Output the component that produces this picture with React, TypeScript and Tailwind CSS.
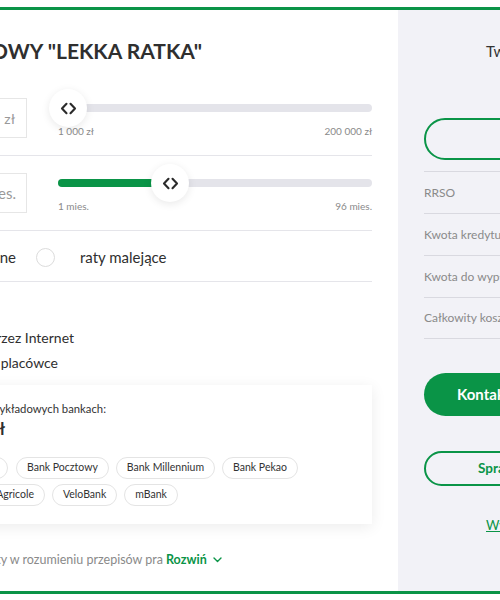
import React from "react";

const GREEN = "#0a9447";

function Chevrons() {
  return (
    <svg width="17" height="13" viewBox="0 0 17 13" fill="none">
      <path d="M6.5 1.8L2 6.5L6.5 11.2" stroke="#2b2b2b" strokeWidth="2.1" strokeLinecap="round" strokeLinejoin="round" />
      <path d="M10.5 1.8L15 6.5L10.5 11.2" stroke="#2b2b2b" strokeWidth="2.1" strokeLinecap="round" strokeLinejoin="round" />
    </svg>
  );
}

function Slider({ fill, thumb, min, max }: { fill: number; thumb: number; min: string; max: string }) {
  return (
    <div className="ml-[31px] w-[314px] shrink-0 pt-[6px]">
      <div className="relative h-[8px] rounded-full bg-[#e4e4ea]">
        {fill > 0 && (
          <div className="absolute left-0 top-0 h-[8px] rounded-full bg-[#0a9447]" style={{ width: fill }} />
        )}
        <div
          className="absolute top-[-15px] flex h-[38px] w-[38px] items-center justify-center rounded-full bg-white shadow-[0_2px_8px_rgba(0,0,0,0.09)]"
          style={{ left: thumb - 19 }}
        >
          <Chevrons />
        </div>
      </div>
      <div className="mt-[12px] flex justify-between text-[10px] leading-[14px] text-[#8a8a8a]">
        <span>{min}</span>
        <span>{max}</span>
      </div>
    </div>
  );
}

function Pill({ label }: { label: string }) {
  return (
    <span className="flex h-[22px] shrink-0 items-center whitespace-nowrap rounded-full border border-[#e4e4e4] px-[10px] text-[10.5px] text-[#333]">
      {label}
    </span>
  );
}

function Radio() {
  return <span className="block h-[19px] w-[19px] shrink-0 rounded-full border border-[#dcdcdc] bg-white" />;
}

export default function App() {
  return (
    <div className="h-[600px] w-[500px] overflow-hidden bg-white pt-[7px] font-['Lato',sans-serif] text-[#2f2f2f]">
      <div className="flex h-[587px] border-y-[3px] border-[#0a9447]">
        {/* left: calculator */}
        <div className="w-[398px] shrink-0 overflow-hidden">
          <div className="ml-[-202px] w-[574px]">
            <h1 className="w-[404px] whitespace-nowrap pt-[27px] text-right text-[21px] font-bold leading-[28px]">
              KREDYT GOTÓWKOWY "LEKKA RATKA"
            </h1>

            <div className="mt-[33px] flex border-b border-[#e5e5ea] pb-[17px]">
              <div className="w-[109px] shrink-0 text-[14px] leading-[40px] text-[#333]">Kwota</div>
              <div className="flex h-[40px] w-[120px] shrink-0 items-center justify-end border border-[#e6e6e6] pr-[11px] text-[14px] whitespace-nowrap">
                <span className="mr-[6px] text-[#333]">10 000</span>
                <span className="text-[#999]">zł</span>
              </div>
              <Slider fill={0} thumb={10} min="1 000 zł" max="200 000 zł" />
            </div>

            <div className="flex border-b border-[#e5e5ea] pb-[17px] pt-[17px]">
              <div className="w-[109px] shrink-0 text-[14px] leading-[40px] text-[#333]">Okres</div>
              <div className="flex h-[40px] w-[120px] shrink-0 items-center justify-end border border-[#e6e6e6] pr-[10px] text-[15px] whitespace-nowrap">
                <span className="mr-[6px] text-[#333]">36</span>
                <span className="text-[#999]">mies.</span>
              </div>
              <Slider fill={100} thumb={112} min="1 mies." max="96 mies." />
            </div>

            <div className="flex items-center border-b border-[#e5e5ea] pb-[14px] pt-[16px]">
              <div className="flex w-[218px] shrink-0 items-center justify-end gap-[20px] text-[15px] leading-[20px] whitespace-nowrap">
                <Radio />
                <span>raty równe</span>
              </div>
              <div className="ml-[20px]">
                <Radio />
              </div>
              <span className="ml-[25px] text-[15px] leading-[20px]">raty malejące</span>
            </div>

            <div className="mt-[43px] text-[14px] leading-[25px] whitespace-nowrap">
              <div className="w-[276px] text-right">Wniosek przez Internet</div>
              <div className="w-[260px] text-right">Wniosek w placówce</div>
            </div>

            <div className="mt-[10px] w-[574px] bg-white pb-[18px] pt-[16px] shadow-[0_3px_14px_rgba(0,0,0,0.08)]">
              <div className="w-[308px] text-right text-[11.3px] leading-[16px] whitespace-nowrap text-[#333]">
                Miesięczna rata w przykładowych bankach:
              </div>
              <div className="mt-[1px] w-[207px] text-right text-[17px] font-bold leading-[22px] whitespace-nowrap">
                od 345,67 zł
              </div>
              <div className="mt-[17px] flex">
                <div className="flex w-[210px] shrink-0 justify-end gap-[8px]">
                  <Pill label="PKO BP" />
                  <Pill label="ING" />
                </div>
                <div className="ml-[8px] flex gap-[7px]">
                  <Pill label="Bank Pocztowy" />
                  <Pill label="Bank Millennium" />
                  <Pill label="Bank Pekao" />
                </div>
              </div>
              <div className="mt-[5px] flex">
                <div className="flex w-[247px] shrink-0 justify-end gap-[7px]">
                  <Pill label="Santander" />
                  <Pill label="Credit Agricole" />
                </div>
                <div className="ml-[7px] flex gap-[7px]">
                  <Pill label="VeloBank" />
                  <Pill label="mBank" />
                </div>
              </div>
            </div>

            <div className="mt-[28px] flex items-center text-[12.5px] leading-[16px] whitespace-nowrap">
              <div className="w-[365px] shrink-0 overflow-hidden text-right text-[#8a8a8a]">
                Informacja: oferta nie stanowi oferty w rozumieniu przepisów pra
              </div>
              <span className="ml-[3px] font-bold text-[#0a9447]">Rozwiń</span>
              <svg className="ml-[6px]" width="9" height="6" viewBox="0 0 9 6" fill="none">
                <path d="M1 1L4.5 4.5L8 1" stroke={GREEN} strokeWidth="1.4" strokeLinecap="round" strokeLinejoin="round" />
              </svg>
            </div>
          </div>
        </div>

        {/* right: summary */}
        <div className="flex-1 overflow-hidden bg-[#f2f2f7] pl-[26px]">
          <div className="w-[260px]">
            <div className="ml-[62px] pt-[31px] text-[15px] leading-[20px] whitespace-nowrap text-[#333]">Twoja rata</div>
            <div className="mt-[57px] flex h-[42px] items-center rounded-full border-2 border-[#0a9447] pl-[90px] text-[18px] font-bold whitespace-nowrap text-[#0a9447]">
              345,67 zł
            </div>
            <div className="mt-[11px] text-[12px] text-[#8a8a8a]">
              {["RRSO", "Kwota kredytu", "Kwota do wypłaty", "Całkowity koszt kredytu"].map((l, i) => (
                <div
                  key={l}
                  className={`flex h-[42px] items-center border-t border-[#d9d9e0] whitespace-nowrap ${i === 3 ? "border-b" : ""}`}
                >
                  {l}
                </div>
              ))}
            </div>
            <div className="mt-[34px] flex h-[43px] items-center rounded-full bg-[#0a9447] pl-[33px] text-[15px] font-bold whitespace-nowrap text-white">
              Kontakt z doradcą
            </div>
            <div className="mt-[35px] flex h-[35px] items-center rounded-full border-2 border-[#0a9447] pl-[52px] text-[13.5px] font-bold whitespace-nowrap text-[#0a9447]">
              Sprawdź ofertę
            </div>
            <div className="ml-[62px] mt-[30px] text-[13px] leading-[18px] whitespace-nowrap text-[#0a9447] underline">
              Wyślij wniosek
            </div>
          </div>
        </div>
      </div>
    </div>
  );
}
